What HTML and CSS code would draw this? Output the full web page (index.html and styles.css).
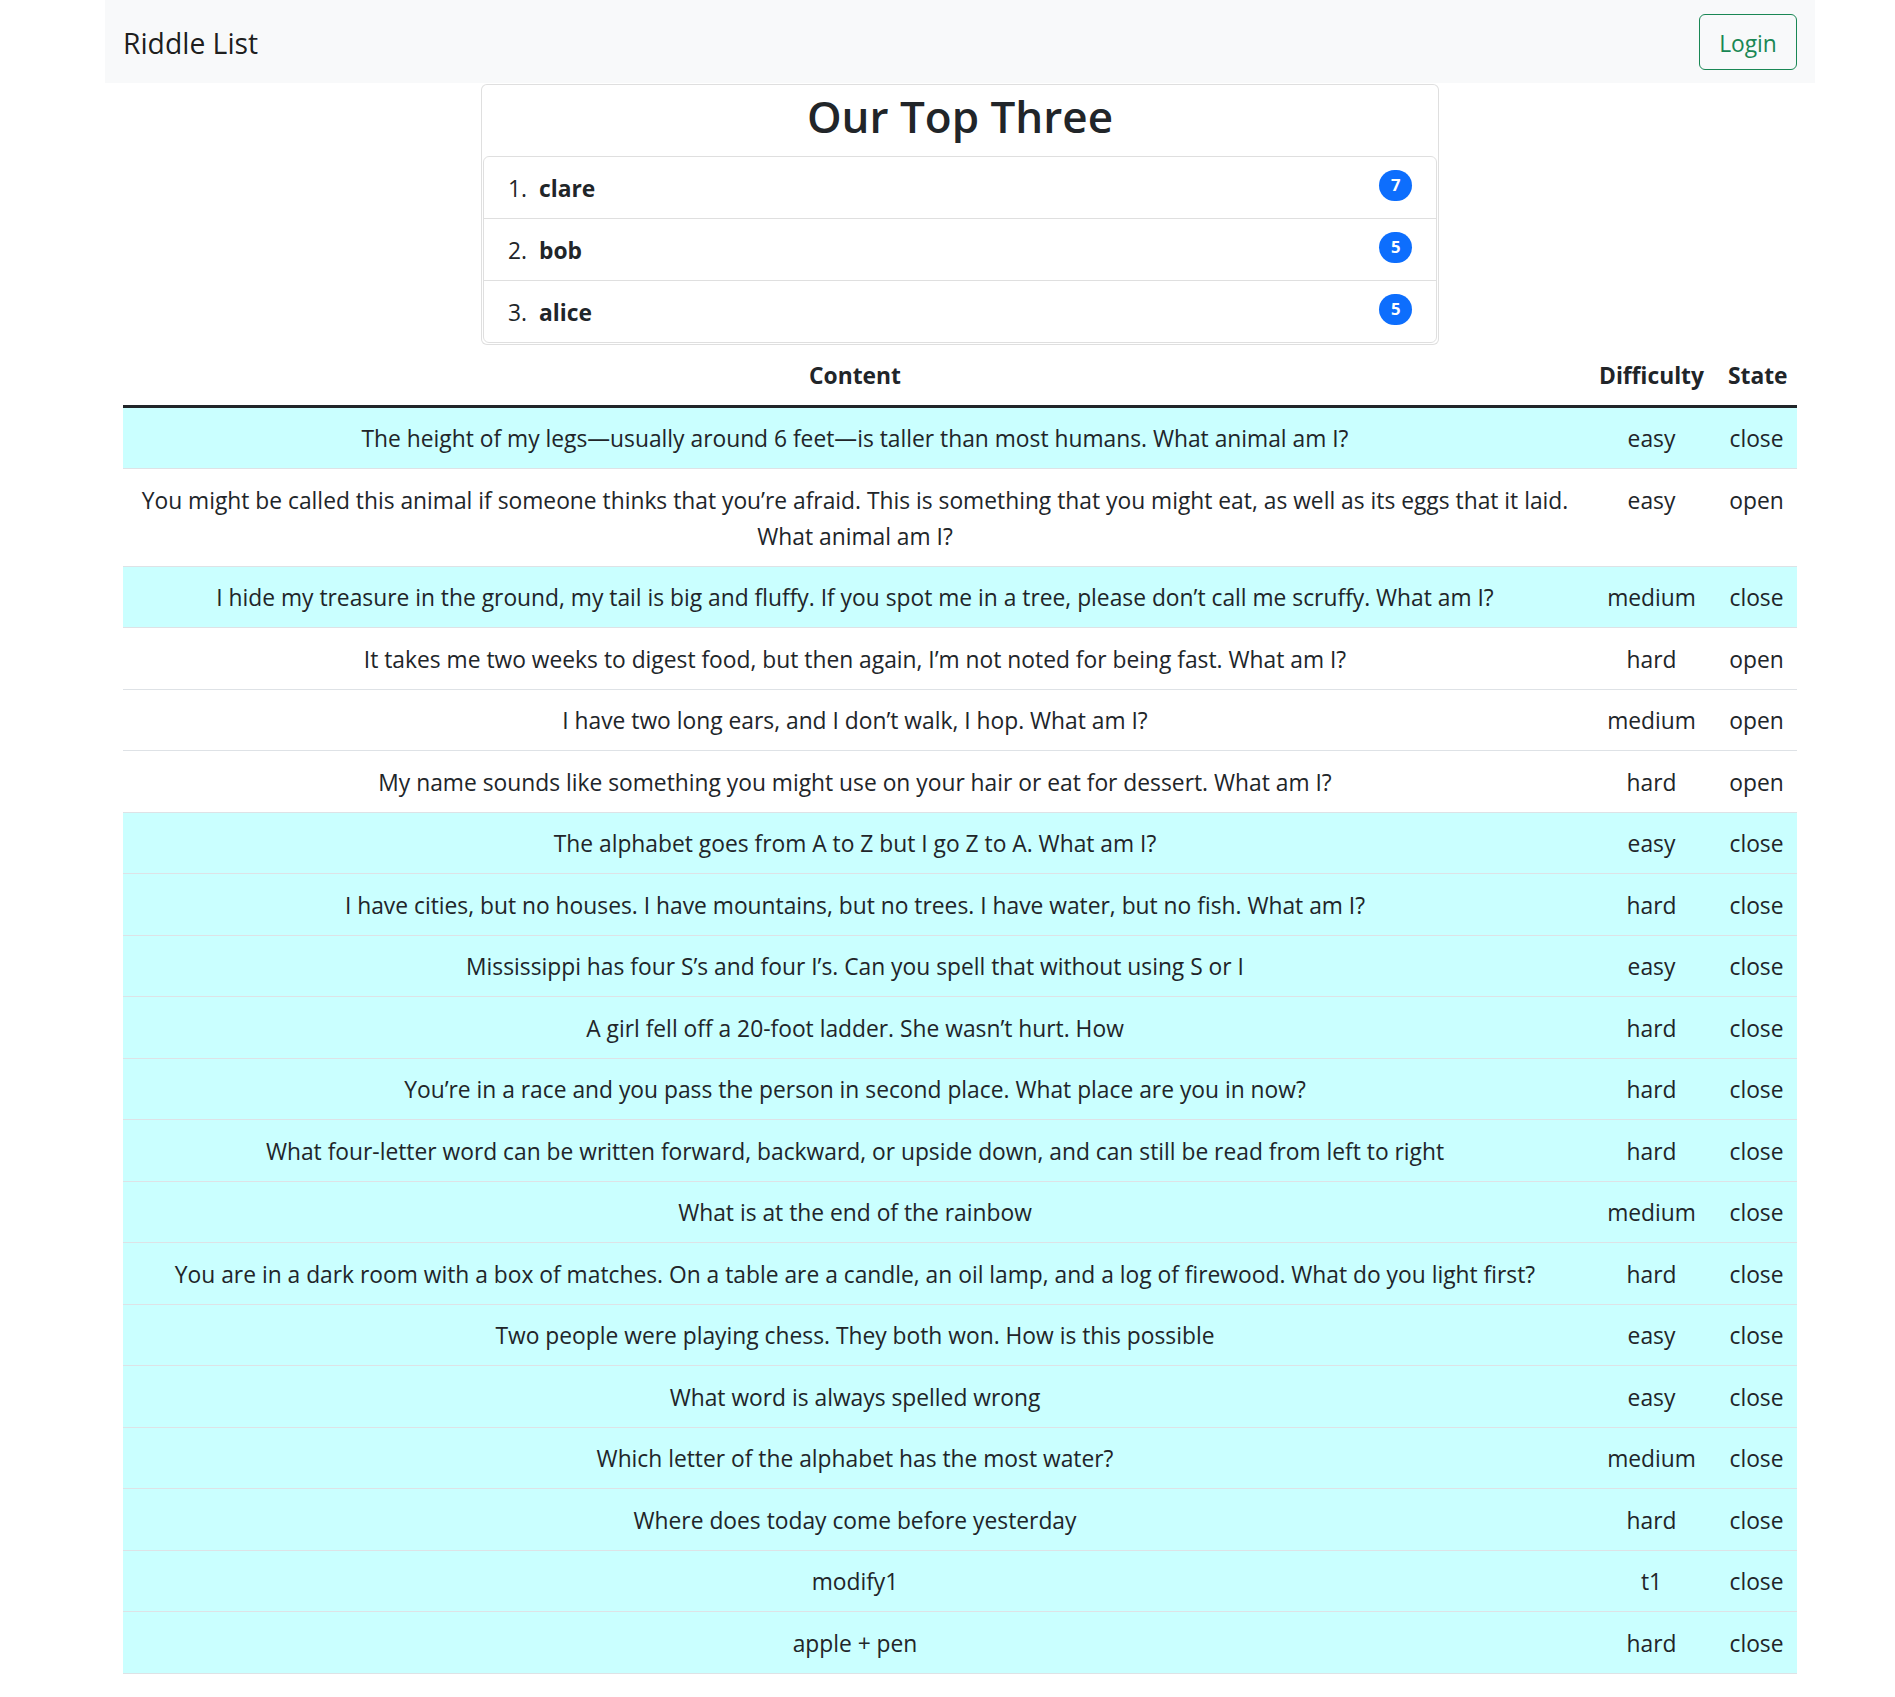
FILE: index.html
```html
<!DOCTYPE html>
<html lang="en">
<head>
<meta charset="utf-8">
<title>Riddle List</title>
<link rel="stylesheet" href="styles.css">
</head>
<body>
<div class="page">
  <nav class="navbar">
    <a class="brand" href="#">Riddle List</a>
    <button class="btn-login" type="button">Login</button>
  </nav>
  <main class="container">
    <section class="card">
      <h2 class="card-title">Our Top Three</h2>
      <ol class="list-group">
        <li class="list-item"><span class="num">1.</span><div class="name">clare</div><span class="badge">7</span></li>
        <li class="list-item"><span class="num">2.</span><div class="name">bob</div><span class="badge">5</span></li>
        <li class="list-item"><span class="num">3.</span><div class="name">alice</div><span class="badge">5</span></li>
      </ol>
    </section>
    <table class="riddles">
      <colgroup><col><col class="col-diff"><col class="col-state"></colgroup>
      <thead>
        <tr><th>Content</th><th>Difficulty</th><th>State</th></tr>
      </thead>
      <tbody>
        <tr class="closed"><td>The height of my legs—usually around 6 feet—is taller than most humans. What animal am I?</td><td>easy</td><td>close</td></tr>
        <tr><td>You might be called this animal if someone thinks that you’re afraid. This is something that you might eat, as well as its eggs that it laid. What animal am I?</td><td>easy</td><td>open</td></tr>
        <tr class="closed"><td>I hide my treasure in the ground, my tail is big and fluffy. If you spot me in a tree, please don’t call me scruffy. What am I?</td><td>medium</td><td>close</td></tr>
        <tr><td>It takes me two weeks to digest food, but then again, I’m not noted for being fast. What am I?</td><td>hard</td><td>open</td></tr>
        <tr><td>I have two long ears, and I don’t walk, I hop. What am I?</td><td>medium</td><td>open</td></tr>
        <tr><td>My name sounds like something you might use on your hair or eat for dessert. What am I?</td><td>hard</td><td>open</td></tr>
        <tr class="closed"><td>The alphabet goes from A to Z but I go Z to A. What am I?</td><td>easy</td><td>close</td></tr>
        <tr class="closed"><td>I have cities, but no houses. I have mountains, but no trees. I have water, but no fish. What am I?</td><td>hard</td><td>close</td></tr>
        <tr class="closed"><td>Mississippi has four S’s and four I’s. Can you spell that without using S or I</td><td>easy</td><td>close</td></tr>
        <tr class="closed"><td>A girl fell off a 20-foot ladder. She wasn’t hurt. How</td><td>hard</td><td>close</td></tr>
        <tr class="closed"><td>You’re in a race and you pass the person in second place. What place are you in now?</td><td>hard</td><td>close</td></tr>
        <tr class="closed"><td>What four-letter word can be written forward, backward, or upside down, and can still be read from left to right</td><td>hard</td><td>close</td></tr>
        <tr class="closed"><td>What is at the end of the rainbow</td><td>medium</td><td>close</td></tr>
        <tr class="closed"><td>You are in a dark room with a box of matches. On a table are a candle, an oil lamp, and a log of firewood. What do you light first?</td><td>hard</td><td>close</td></tr>
        <tr class="closed"><td>Two people were playing chess. They both won. How is this possible</td><td>easy</td><td>close</td></tr>
        <tr class="closed"><td>What word is always spelled wrong</td><td>easy</td><td>close</td></tr>
        <tr class="closed"><td>Which letter of the alphabet has the most water?</td><td>medium</td><td>close</td></tr>
        <tr class="closed"><td>Where does today come before yesterday</td><td>hard</td><td>close</td></tr>
        <tr class="closed"><td>modify1</td><td>t1</td><td>close</td></tr>
        <tr class="closed"><td>apple + pen</td><td>hard</td><td>close</td></tr>
      </tbody>
    </table>
  </main>
</div>
</body>
</html>
```

FILE: styles.css
```css
* { box-sizing: border-box; }

html, body {
  margin: 0;
  padding: 0;
  background: #fff;
}

body {
  font-family: "Open Sans", "Noto Sans", sans-serif;
  font-size: 22.8px;
  line-height: 36px;
  color: #212529;
}

.page {
  width: 1710px;
  margin-left: 105px;
}

.navbar {
  display: flex;
  align-items: center;
  justify-content: space-between;
  background: #f8f9fa;
  height: 83px;
  padding: 0 18px;
}

.brand {
  font-size: 28.3px;
  line-height: 45px;
  color: rgba(0, 0, 0, 0.9);
  text-decoration: none;
  padding-top: 4px;
}

.btn-login {
  font-family: inherit;
  font-size: 22.8px;
  line-height: 36px;
  color: #198754;
  background: transparent;
  border: 1px solid #198754;
  border-radius: 6px;
  padding: 11px 16px 7px;
  width: 98px;
  height: 56px;
  margin-top: 1px;
}

.container {
  padding: 0 18px;
}

.card {
  width: 958px;
  margin: 1px auto 0;
  border: 1px solid rgba(0, 0, 0, 0.125);
  border-radius: 6px;
  background: #fff;
}

.card-title {
  margin: 0 0 10px;
  padding-top: 3px;
  text-align: center;
  font-size: 44px;
  font-weight: 600;
  line-height: 57.6px;
}

.list-group {
  list-style: none;
  padding: 0;
  border: 1px solid rgba(0, 0, 0, 0.125);
  border-radius: 6px;
  margin: 0 1px 1px;
}

.list-item {
  display: flex;
  align-items: flex-start;
  padding: 14.5px 24px 10.5px;
  border-bottom: 1px solid rgba(0, 0, 0, 0.125);
}

.list-item:last-child { border-bottom: 0; }

.num { white-space: pre; }

.name {
  margin-left: 12px;
  margin-right: auto;
  font-weight: 700;
}

.badge {
  background: #0d6efd;
  color: #fff;
  font-size: 16.7px;
  font-weight: 700;
  line-height: 1;
  padding: 7px 11.5px;
  border-radius: 50px;
  margin-top: -1px;
}

.riddles {
  width: 100%;
  border-collapse: collapse;
  table-layout: fixed;
}

.col-diff { width: 129px; }
.col-state { width: 81px; }

.riddles th {
  font-weight: 700;
  text-align: center;
  vertical-align: bottom;
  padding: 13px 12px 11px;
  border-bottom: 3px solid #212529;
}

.riddles td {
  text-align: center;
  vertical-align: top;
  padding: 13.5px 12px 11px;
  border-bottom: 1px solid #dee2e6;
}

.riddles tr.closed td {
  background: #caffff;
}
```
